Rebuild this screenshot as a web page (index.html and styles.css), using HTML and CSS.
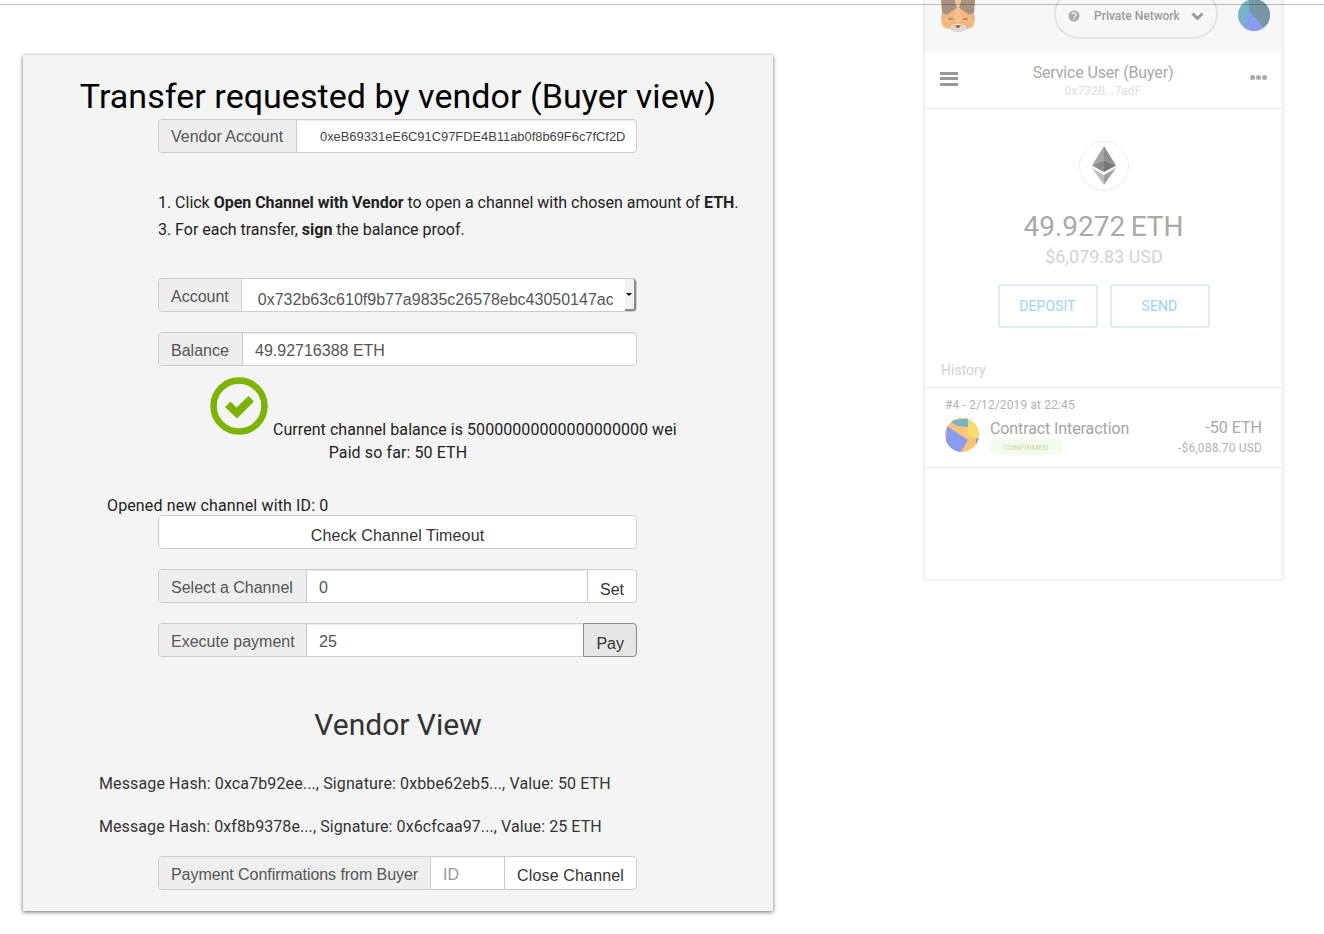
FILE: index.html
```html
<!DOCTYPE html>
<html>

<head>
    <title>Transfer requested by vendor</title>
    <link rel="stylesheet" href="styles.css">
</head>

<body>
    <div class="top-line"></div>

    <div class="card">
        <h1>Transfer requested by vendor (Buyer view)</h1>
        <div class="input-group vendor-group">
            <span class="addon addon-vendor">Vendor Account</span>
            <div class="field field-small">0xeB69331eE6C91C97FDE4B11ab0f8b69F6c7fCf2D</div>
        </div>

        <div class="steps">
            <p>1. Click <b>Open Channel with Vendor</b> to open a channel with chosen amount of <b>ETH</b>.</p>
            <p>3. For each transfer, <b>sign</b> the balance proof.</p>
        </div>

        <div class="input-group account-group">
            <span class="addon">Account</span>
            <div class="select-box">
                <span class="select-text">0x732b63c610f9b77a9835c26578ebc43050147ac6</span>
                <span class="select-arrow"></span>
            </div>
        </div>
        <div class="input-group balance-group">
            <span class="addon addon-balance">Balance</span>
            <div class="field">49.92716388 ETH</div>
        </div>

        <div class="status">
            <svg class="check" width="58" height="58" viewBox="0 0 58 58">
                <circle cx="29" cy="29" r="25.5" fill="none" stroke="#7cb305" stroke-width="6.5"/>
                <path d="M15 30l5.500-5.500 6 6L38.500 19l5.500 5.500-17 17z" fill="#7cb305"/>
            </svg>
            <span class="status-text">Current channel balance is 50000000000000000000 wei</span>
        </div>
        <div class="paid">Paid so far: 50 ETH</div>

        <div class="opened">Opened new channel with ID: 0</div>
        <div class="wide-btn">Check Channel Timeout</div>

        <div class="input-group channel-group">
            <span class="addon addon-channel">Select a Channel</span>
            <div class="field">0</div>
            <span class="btn">Set</span>
        </div>
        <div class="input-group pay-group">
            <span class="addon addon-channel">Execute payment</span>
            <div class="field">25</div>
            <span class="btn btn-active">Pay</span>
        </div>

        <h2>Vendor View</h2>
        <p class="message first">Message Hash: 0xca7b92ee..., Signature: 0xbbe62eb5..., Value: 50 ETH</p>
        <p class="message second">Message Hash: 0xf8b9378e..., Signature: 0x6cfcaa97..., Value: 25 ETH</p>

        <div class="input-group close-group">
            <span class="addon addon-close">Payment Confirmations from Buyer</span>
            <div class="field placeholder">ID</div>
            <span class="btn">Close Channel</span>
        </div>
    </div>

    <!-- wallet popup -->
    <div class="wallet">
        <div class="wallet-head">
            <svg class="fox" width="36" height="32" viewBox="0 0 36 32">
                <polygon points="1,0 15,0 17,8 7,15 2,13" fill="#a8917f"/>
                <polygon points="35,0 21,0 19,8 29,15 34,13" fill="#a8917f"/>
                <polygon points="15,0 21,0 19,8 17,8" fill="#f3c193"/>
                <polygon points="7,15 17,8 15,17 5,20" fill="#f6b577"/>
                <polygon points="29,15 19,8 21,17 31,20" fill="#f6b577"/>
                <polygon points="2,13 7,15 5,20 1,19" fill="#edb07c"/>
                <polygon points="34,13 29,15 31,20 35,19" fill="#edb07c"/>
                <polygon points="17,8 19,8 21,17 18,24 15,17" fill="#f4c08f"/>
                <polygon points="1,19 5,20 15,17 18,24 12,25 9,29 3,27" fill="#f5b67c"/>
                <polygon points="35,19 31,20 21,17 18,24 24,25 27,29 33,27" fill="#f5b67c"/>
                <polygon points="12,25 24,25 27,29 22,32 14,32 9,29" fill="#e6d6c8"/>
                <polygon points="15,25 21,25 19,28 17,28" fill="#8b7566"/>
                <polygon points="8,18 13,18 13,20 9,20" fill="#a3948b"/>
                <polygon points="28,18 23,18 23,20 27,20" fill="#a3948b"/>
            </svg>
            <div class="network">
                <svg width="12" height="12" viewBox="0 0 12 12">
                    <circle cx="6" cy="6" r="5.500" fill="#aaa"/>
                    <path d="M4 4.600a2 1.900 0 1 1 3 1.600c-.7.400-1 .7-1 1.300" fill="none" stroke="#f7f7f7" stroke-width="1.300"/>
                    <rect x="5.300" y="8.300" width="1.400" height="1.400" fill="#f7f7f7"/>
                </svg>
                <span class="network-name">Private Network</span>
                <svg width="13" height="9" viewBox="0 0 13 9">
                    <path d="M1.500 1.500l5 5 5-5" fill="none" stroke="#999" stroke-width="3"/>
                </svg>
            </div>
            <svg class="blockie" width="32" height="32" viewBox="0 0 32 32">
                <clipPath id="clip-a"><circle cx="16" cy="16" r="16"/></clipPath>
                <g clip-path="url(#clip-a)">
                    <rect width="32" height="32" fill="#77b3c4"/>
                    <polygon points="11,0 32,0 32,24 26,29 11,12" fill="#7797a8"/>
                    <polygon points="11,12 26,29 20,32 5,32" fill="#8b9cf0"/>
                </g>
            </svg>
        </div>

        <div class="wallet-account">
            <span class="menu-icon"><i></i><i></i><i></i></span>
            <div class="account-name">
                <div class="name">Service User (Buyer)</div>
                <div class="addr">0x732B...7adF</div>
            </div>
            <span class="dots"><i></i><i></i><i></i></span>
        </div>

        <div class="wallet-balance">
            <div class="eth-logo">
                <svg width="26" height="40" viewBox="0 0 26 40">
                    <polygon points="13,0 13,14 1,19.500" fill="#a6a6a6"/>
                    <polygon points="13,0 25,19.500 13,14" fill="#8f8f8f"/>
                    <polygon points="1,19.500 13,14 13,26" fill="#8a8a8a"/>
                    <polygon points="25,19.500 13,14 13,26" fill="#777"/>
                    <polygon points="1,22 13,29 13,39" fill="#bdbdbd"/>
                    <polygon points="25,22 13,29 13,39" fill="#a0a0a0"/>
                </svg>
            </div>
            <div class="eth-amount">49.9272 ETH</div>
            <div class="usd-amount">$6,079.83 USD</div>
            <div class="wallet-buttons">
                <span class="wallet-btn">DEPOSIT</span>
                <span class="wallet-btn">SEND</span>
            </div>
        </div>

        <div class="history-title">History</div>
        <div class="tx">
            <div class="tx-date">#4 - 2/12/2019 at 22:45</div>
            <div class="tx-row">
                <svg class="tx-icon" width="34" height="34" viewBox="0 0 34 34">
                    <clipPath id="clip-b"><circle cx="17" cy="17" r="17"/></clipPath>
                    <g clip-path="url(#clip-b)">
                        <rect width="34" height="34" fill="#fbc477"/>
                        <polygon points="5,3 23,0 23,9 12,8" fill="#77b3c4"/>
                        <polygon points="23,1 34,8 33,20 22,18 23,9" fill="#f8dc6f"/>
                        <polygon points="2,8 23,22 16,34 0,34" fill="#8b9cf0"/>
                        <polygon points="31,20 34,20 33,28 31,28" fill="#77b3c4"/>
                    </g>
                </svg>
                <div class="tx-main">
                    <div class="tx-title">Contract Interaction</div>
                    <span class="tx-badge">CONFIRMED</span>
                </div>
                <div class="tx-values">
                    <div class="tx-eth">-50 ETH</div>
                    <div class="tx-usd">-$6,088.70 USD</div>
                </div>
            </div>
        </div>
    </div>
</body>

</html>
```

FILE: styles.css
```css
body {
    margin: 0;
    padding: 0 0 23px;
    background-color: #fff;
    font-family: Roboto, sans-serif;
    font-size: 16px;
    color: #222;
}

.top-line {
    position: absolute;
    top: 4px;
    left: 0;
    right: 0;
    height: 1px;
    background-color: rgba(0, 0, 0, 0.25);
    z-index: 5;
}

/* main card */
.card {
    width: 750px;
    height: 856px;
    margin: 55px 0 0 23px;
    padding-top: 21px;
    box-sizing: border-box;
    background-color: #f4f4f4;
    box-shadow: 0 1px 4px rgba(0, 0, 0, 0.6);
}

h1 {
    margin: 0;
    height: 40px;
    font-size: 34px;
    font-weight: 400;
    line-height: 40px;
    letter-spacing: 0.05px;
    color: #000;
    text-align: center;
}

h2 {
    margin: 50px 0 0;
    height: 36px;
    font-size: 30px;
    font-weight: 400;
    line-height: 36px;
    color: #333;
    text-align: center;
}

.input-group {
    display: flex;
    width: 479px;
    height: 34px;
    margin: 3px 0 0 135px;
    box-sizing: border-box;
    border: 1px solid #ccc;
    border-radius: 4px;
    background-color: #fff;
    font-family: "Liberation Sans", Arial, sans-serif;
    color: #555;
}

.addon {
    padding: 0 12px;
    box-sizing: border-box;
    line-height: 36px;
    white-space: nowrap;
    background-color: #eee;
    border-right: 1px solid #ccc;
    border-radius: 3px 0 0 3px;
}

.addon-vendor {
    width: 138px;
}

.addon-balance {
    width: 84px;
}

.addon-channel {
    width: 148px;
}

.addon-close {
    width: 272px;
    letter-spacing: -0.06px;
}

.field {
    flex: 1;
    min-width: 0;
    padding: 0 12px;
    line-height: 36px;
    border-radius: 0 3px 3px 0;
    box-shadow: inset 0 1px 1px rgba(0, 0, 0, 0.075);
}

.vendor-group .addon,
.vendor-group .field {
    line-height: 34px;
}

.field-small {
    padding-left: 23px;
    font-size: 12.880px;
    color: #444;
}

.placeholder {
    color: #999;
    border-radius: 0;
}

.btn {
    padding: 4px 12px 0;
    line-height: 32px;
    color: #333;
    border-left: 1px solid #ccc;
    white-space: nowrap;
}

.btn-active {
    margin: -1px -1px -1px 0;
    background-color: #e6e6e6;
    border: 1px solid #8c8c8c;
    border-radius: 0 4px 4px 0;
}

.steps {
    margin: 36px 0 0 135px;
    line-height: 27px;
    letter-spacing: -0.02px;
    white-space: nowrap;
}

.steps p {
    margin: 0;
}

.account-group {
    margin-top: 35px;
}

.select-box {
    flex: 1;
    display: flex;
    min-width: 0;
}

.select-text {
    width: 355px;
    margin-left: 16px;
    overflow: hidden;
    white-space: nowrap;
    line-height: 42px;
}

.select-arrow {
    width: 9px;
    margin-left: auto;
    background-color: #f2f2f2;
    border-right: 2px solid #8a8a8a;
    border-bottom: 2px solid #8a8a8a;
    border-radius: 0 3px 3px 0;
    position: relative;
}

.select-arrow::after {
    content: "";
    position: absolute;
    top: 14px;
    left: 1px;
    border-left: 3px solid transparent;
    border-right: 3px solid transparent;
    border-top: 3px solid #000;
}

.balance-group {
    margin-top: 20px;
}

.status {
    display: flex;
    align-items: flex-end;
    margin: 11px 0 0 187px;
}

.status-text {
    margin-left: 5px;
    line-height: 10px;
    letter-spacing: 0.06px;
    white-space: nowrap;
}

.paid {
    margin-top: 8px;
    line-height: 20px;
    letter-spacing: 0.1px;
    text-align: center;
}

.opened {
    margin: 33px 0 0 84px;
    line-height: 20px;
    letter-spacing: 0.13px;
}

.wide-btn {
    width: 479px;
    height: 34px;
    margin: -1px 0 0 135px;
    box-sizing: border-box;
    border: 1px solid #ccc;
    border-radius: 4px;
    background-color: #fff;
    font-family: "Liberation Sans", Arial, sans-serif;
    line-height: 40px;
    letter-spacing: 0.13px;
    text-align: center;
    color: #333;
}

.channel-group,
.pay-group {
    margin-top: 20px;
}

.message {
    margin: 0;
    padding-left: 76px;
    line-height: 22px;
    letter-spacing: 0.12px;
    color: #333;
}

.message.first {
    margin-top: 30px;
}

.message.second {
    margin-top: 21px;
    letter-spacing: 0.08px;
}

.close-group {
    margin-top: 18px;
}

.close-group .btn {
    padding-top: 3px;
    letter-spacing: 0.15px;
}

/* wallet popup */
.wallet {
    position: absolute;
    top: 0;
    left: 925px;
    width: 357px;
    height: 579px;
    background-color: #fff;
    box-shadow: 0 0 3px 1px rgba(0, 0, 0, 0.12);
    overflow: hidden;
    color: #aaa;
}

.wallet-head {
    display: flex;
    align-items: flex-end;
    height: 52px;
    padding: 0 12px 21px 15px;
    box-sizing: border-box;
    background-color: #f7f7f7;
}

.fox {
    flex: none;
    margin-bottom: -1px;
}

.network {
    display: flex;
    align-items: center;
    flex: none;
    width: 164px;
    height: 50px;
    margin: 0 20px -8px 78px;
    padding: 4px 0 0 12px;
    box-sizing: border-box;
    border: 2px solid #e4e4e4;
    border-radius: 26px;
    font-size: 12px;
    font-weight: 500;
    color: #9c9c9c;
}

.network svg {
    flex: none;
}

.network-name {
    margin: 0 11px 0 14px;
    white-space: nowrap;
}

.blockie {
    flex: none;
}

.wallet-account {
    display: flex;
    align-items: center;
    height: 57px;
    padding: 0 15px;
    box-sizing: border-box;
    border-bottom: 1px solid #eee;
}

.menu-icon i {
    display: block;
    width: 18px;
    height: 3px;
    margin-bottom: 2.500px;
    background-color: #999;
}

.account-name {
    flex: 1;
    margin: 1px 2px 0 0;
    text-align: center;
}

.name {
    line-height: 20px;
    letter-spacing: -0.15px;
    color: #a8a8a8;
}

.addr {
    font-size: 12px;
    line-height: 16px;
    color: #ddd;
}

.dots {
    display: flex;
    gap: 1px;
    margin-top: -6px;
}

.dots i {
    width: 5px;
    height: 5px;
    border-radius: 50%;
    background-color: #aaa;
}

.wallet-balance {
    padding-top: 32px;
    text-align: center;
}

.eth-logo {
    display: flex;
    align-items: center;
    justify-content: center;
    width: 50px;
    height: 50px;
    margin: 0 auto;
    box-sizing: border-box;
    border: 1px solid #ececec;
    border-radius: 50%;
}

.eth-amount {
    margin-top: 19px;
    font-size: 28px;
    line-height: 34px;
    word-spacing: -1.500px;
    color: #a9a9a9;
}

.usd-amount {
    margin-top: 2px;
    padding-left: 1px;
    font-size: 18px;
    line-height: 22px;
    color: #d2d2d2;
}

.wallet-buttons {
    display: flex;
    justify-content: center;
    gap: 12px;
    margin-top: 16px;
}

.wallet-btn {
    width: 100px;
    height: 44px;
    box-sizing: border-box;
    border: 2px solid #dfebf4;
    border-radius: 3px;
    font-size: 14px;
    line-height: 40px;
    letter-spacing: 0.1px;
    color: #9ad3f8;
}

.history-title {
    margin-top: 32px;
    padding: 0 0 7px 16px;
    font-size: 14px;
    line-height: 20px;
    color: #d0d0d0;
    border-bottom: 1px solid #eee;
}

.tx {
    height: 80px;
    padding: 9px 20px 0;
    box-sizing: border-box;
    border-bottom: 1px solid #eee;
}

.tx-date {
    font-size: 12px;
    line-height: 16px;
    letter-spacing: 0.13px;
    color: #b2b2b2;
}

.tx-row {
    display: flex;
    align-items: flex-start;
    margin-top: 1px;
}

.tx-icon {
    flex: none;
    margin-top: 4px;
}

.tx-main {
    flex: 1;
    margin: 5px 0 0 11px;
}

.tx-title {
    line-height: 20px;
    letter-spacing: -0.1px;
    color: #a4a4a4;
}

.tx-badge {
    display: block;
    width: 72px;
    height: 16px;
    border-radius: 4px;
    background-color: #f2fbec;
    font-size: 8px;
    line-height: 17px;
    text-align: center;
    color: #c3db9e;
}

.tx-values {
    margin-top: 4px;
    text-align: right;
}

.tx-eth {
    line-height: 20px;
    color: #a9a9a9;
}

.tx-usd {
    font-size: 12px;
    line-height: 20px;
    letter-spacing: 0.15px;
    color: #b4b4b4;
}
```
